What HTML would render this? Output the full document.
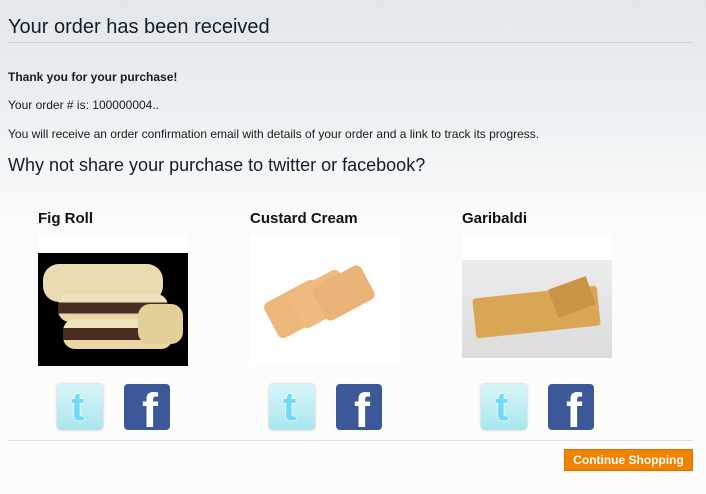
<!DOCTYPE html>
<html><head><meta charset="utf-8"><style>
body{margin:0;width:706px;height:494px;overflow:hidden;font-family:"Liberation Sans",Arial,sans-serif;color:#1a1a1a;
background:linear-gradient(180deg,#e2e7ea 0%,#eef1f3 25%,#fbfbfb 45%,#fdfcfa 100%);position:relative}
.a{position:absolute;margin:0}
h1{font-size:20px;font-weight:normal;color:#0f1e2c}
.line{position:absolute;height:1px;background:#cfd3d6}
p{font-size:12px}
h2{font-size:18px;font-weight:normal;color:#0f1e2c}
h3{font-size:15px;font-weight:bold;color:#111}
.img{position:absolute;background:#fff;width:150px;height:132px;top:234px}
.tw{position:absolute;top:384px;width:46px;height:46px;border-radius:4px;background:linear-gradient(#d8f5f8,#a8e6ee);box-shadow:0 0 2px #bbb;overflow:hidden}
.tw span{position:absolute;left:14px;top:1px;font:bold 40px "Liberation Sans",sans-serif;color:#6fdaf7;text-shadow:0 0 2px #fff,0 0 2px #fff}
.fb{position:absolute;top:384px;width:46px;height:46px;border-radius:4px;background:#3b5898;overflow:hidden}
.fb span{position:absolute;left:18px;top:0px;font:bold 48px "Liberation Sans",sans-serif;color:#fff}
.btn{position:absolute;left:564px;top:449px;width:127px;height:20px;background:#f18200;border:1px solid #d86f00;color:#fff;font:bold 12px "Liberation Sans",sans-serif;text-align:center;line-height:20px}
</style></head><body>
<h1 class="a" style="left:8px;top:16px">Your order has been received</h1>
<div class="line" style="left:8px;top:42px;width:685px"></div>
<p class="a" style="left:8px;top:70px;font-weight:bold">Thank you for your purchase!</p>
<p class="a" style="left:8px;top:98px">Your order # is: 100000004..</p>
<p class="a" style="left:8px;top:127px">You will receive an order confirmation email with details of your order and a link to track its progress.</p>
<h2 class="a" style="left:8px;top:155px">Why not share your purchase to twitter or facebook?</h2>

<h3 class="a" style="left:38px;top:210px">Fig Roll</h3>
<h3 class="a" style="left:250px;top:210px">Custard Cream</h3>
<h3 class="a" style="left:462px;top:210px">Garibaldi</h3>

<div class="img" style="left:38px">
 <div style="position:absolute;left:0;top:19px;width:150px;height:113px;background:#000"></div>
 <div style="position:absolute;left:5px;top:30px;width:120px;height:38px;border-radius:16px;background:#e9dcb0"></div>
 <div style="position:absolute;left:20px;top:60px;width:110px;height:28px;border-radius:12px;background:linear-gradient(#efe3bb 0 30%,#4a2d22 30% 70%,#e8d7a4 70%)"></div>
 <div style="position:absolute;left:25px;top:85px;width:110px;height:30px;border-radius:12px;background:linear-gradient(#efe3bb 0 30%,#4a2d22 30% 70%,#e8d7a4 70%)"></div>
 <div style="position:absolute;left:100px;top:70px;width:45px;height:40px;border-radius:12px;background:#e3cf9a"></div>
</div>
<div class="img" style="left:250px">
 <div style="position:absolute;left:18px;top:55px;width:58px;height:40px;border-radius:6px;background:#eeb77a;transform:rotate(-28deg)"></div>
 <div style="position:absolute;left:42px;top:45px;width:58px;height:40px;border-radius:6px;background:#f0bb80;transform:rotate(-28deg)"></div>
 <div style="position:absolute;left:66px;top:40px;width:55px;height:38px;border-radius:6px;background:#eab378;transform:rotate(-28deg)"></div>
</div>
<div class="img" style="left:462px;height:124px">
 <div style="position:absolute;left:0;top:26px;width:150px;height:98px;background:linear-gradient(#ececec,#dcdcdc)"></div>
 <div style="position:absolute;left:12px;top:58px;width:125px;height:40px;background:#d9a656;transform:rotate(-6deg);border-radius:3px"></div>
 <div style="position:absolute;left:90px;top:48px;width:40px;height:30px;background:#c99545;transform:rotate(-20deg)"></div>
</div>

<div class="tw" style="left:57px"><span>t</span></div>
<div class="fb" style="left:124px"><span>f</span></div>
<div class="tw" style="left:269px"><span>t</span></div>
<div class="fb" style="left:336px"><span>f</span></div>
<div class="tw" style="left:481px"><span>t</span></div>
<div class="fb" style="left:548px"><span>f</span></div>

<div class="line" style="left:8px;top:440px;width:685px;background:#dedede"></div>
<div class="btn">Continue Shopping</div>
</body></html>
